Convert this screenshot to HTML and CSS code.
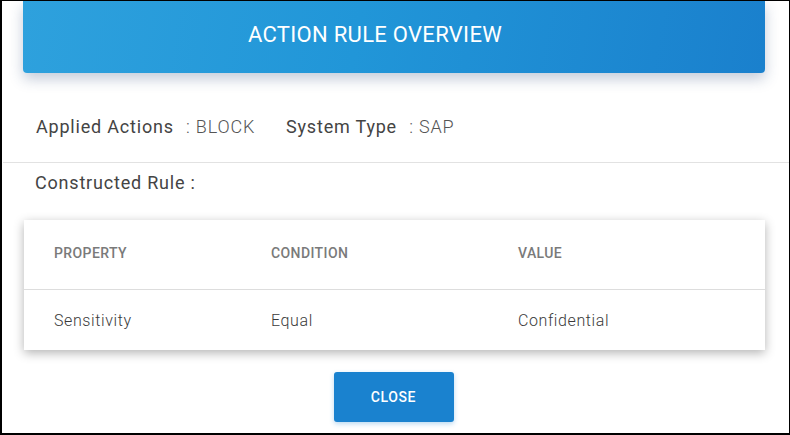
FILE: index.html
```html
<!DOCTYPE html>
<html lang="en">
<head>
    <title>Action Rule Overview</title>
    <link rel="stylesheet" href="styles.css">
</head>
<body>
    <div class="modal">
        <div class="modal-header">
            <h1 class="title">ACTION RULE OVERVIEW</h1>
        </div>

        <div class="info">
            <div class="info-item">
                <span class="info-label">Applied Actions</span>
                <span class="info-value">: BLOCK</span>
            </div>
            <div class="info-item">
                <span class="info-label">System Type</span>
                <span class="info-value">: SAP</span>
            </div>
        </div>

        <h2 class="section-title">Constructed Rule :</h2>

        <div class="rule-card">
            <div class="rule-row rule-head">
                <span>PROPERTY</span>
                <span>CONDITION</span>
                <span>VALUE</span>
            </div>
            <div class="rule-row rule-body">
                <span>Sensitivity</span>
                <span>Equal</span>
                <span>Confidential</span>
            </div>
        </div>

        <div class="actions">
            <button class="btn-close" type="button">CLOSE</button>
        </div>
    </div>
</body>
</html>
```

FILE: styles.css
```css
* {
    box-sizing: border-box;
    margin: 0;
    padding: 0;
}

body {
    font-family: Roboto, "Noto Sans", Arial, sans-serif;
    background: #ffffff;
}

.modal {
    width: 790px;
    height: 435px;
    border-style: solid;
    border-color: #000000;
    border-width: 1px 1px 2px 2px;
    background: #ffffff;
    overflow: hidden;
}

.modal-header {
    height: 72px;
    margin: 0 24px 0 21px;
    padding: 0 38px 5px 0;
    display: flex;
    align-items: center;
    justify-content: center;
    background: linear-gradient(100deg, #2ea1dd 0%, #2196d8 45%, #1a80cd 100%);
    border-radius: 0 0 4px 4px;
    box-shadow: 0 6px 14px rgba(40, 70, 120, 0.28);
}

.title {
    color: #ffffff;
    font-size: 22px;
    font-weight: 400;
    letter-spacing: 0.3px;
}

.info {
    height: 90px;
    padding: 42px 0 0 33px;
    display: flex;
    gap: 31px;
    border-bottom: 1px solid #e2e2e2;
    margin-left: 1px;
}

.info-item {
    font-size: 18px;
    line-height: 24px;
    letter-spacing: 0.8px;
}

.info-label {
    color: #444444;
    margin-right: 7px;
}

.info-value {
    color: #555555;
    font-weight: 300;
}

.section-title {
    margin: 8px 0 0 33px;
    font-size: 18px;
    line-height: 24px;
    font-weight: 400;
    color: #444444;
    letter-spacing: 0.8px;
}

.rule-card {
    margin: 25px 24px 0 22px;
    background: #ffffff;
    box-shadow: 0 3px 10px rgba(0, 0, 0, 0.3);
}

.rule-row {
    display: grid;
    grid-template-columns: 217px 247px 1fr;
    padding-left: 30px;
}

.rule-head {
    height: 70px;
    padding-top: 25px;
    font-size: 14px;
    line-height: 16px;
    font-weight: 500;
    color: #7a7a7a;
    letter-spacing: 0.4px;
    border-bottom: 1px solid #dddddd;
}

.rule-body {
    height: 60px;
    padding-top: 21px;
    font-size: 16px;
    line-height: 20px;
    font-weight: 300;
    color: #3a3a3a;
    letter-spacing: 0.6px;
}

.actions {
    display: flex;
    justify-content: center;
    margin-top: 22px;
    padding-right: 4px;
}

.btn-close {
    width: 120px;
    height: 50px;
    border: none;
    border-radius: 3px;
    background: #1a82cf;
    color: #ffffff;
    font: inherit;
    font-size: 14px;
    font-weight: 500;
    letter-spacing: 0.6px;
    box-shadow: 0 2px 5px rgba(26, 130, 207, 0.3);
    cursor: pointer;
}
```
